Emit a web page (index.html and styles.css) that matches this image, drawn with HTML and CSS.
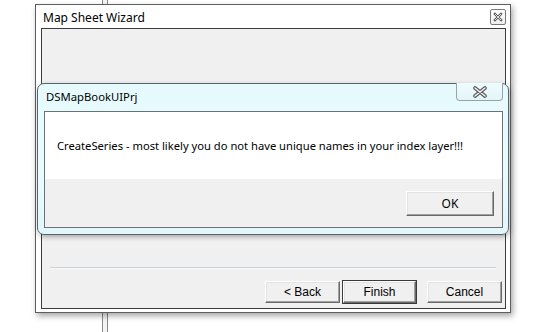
FILE: index.html
```html
<!DOCTYPE html>
<html lang="en">
<head>
  <meta charset="UTF-8" />
  <title>Map Sheet Wizard</title>
  <link rel="stylesheet" href="styles.css">
</head>
<body>
  <div class="desktop">
    <div class="rail"></div>

    <div class="wizard">
      <div class="titlebar">
        <span class="title">Map Sheet Wizard</span>
        <span class="close-small">
          <svg width="10" height="10" viewBox="0 0 10 10">
            <path d="M2 2 L8 8 M8 2 L2 8" stroke="#5a5a5a" stroke-width="2.4" stroke-linecap="square"/>
            <path d="M2 2 L8 8 M8 2 L2 8" stroke="#fff" stroke-width="0.8"/>
          </svg>
        </span>
      </div>
      <div class="client">
        <div class="spacer"></div>
        <div class="separator"></div>
        <div class="nav-buttons">
          <button class="btn nav-btn">&lt; Back</button>
          <button class="btn nav-btn default">Finish</button>
          <button class="btn nav-btn cancel">Cancel</button>
        </div>
      </div>
    </div>

    <div class="msgbox">
      <div class="msg-titlebar">
        <span class="msg-title">DSMapBookUIPrj</span>
        <span class="msg-close">
          <svg width="16" height="12" viewBox="0 0 16 12">
            <path d="M3 2 L13 10 M13 2 L3 10" stroke="#555" stroke-width="3.6" stroke-linecap="round"/>
            <path d="M3 2 L13 10 M13 2 L3 10" stroke="#fff" stroke-width="1.4" stroke-linecap="round"/>
          </svg>
        </span>
      </div>
      <div class="msg-body">
        <div class="msg-text">CreateSeries - most likely you do not have unique names in your index layer!!!</div>
        <div class="msg-footer">
          <button class="btn ok-btn">OK</button>
        </div>
      </div>
    </div>
  </div>
</body>
</html>
```

FILE: styles.css
```css
body {
  margin: 0;
  background-color: #ffffff;
  font-family: 'Noto Sans', sans-serif;
}

.desktop {
  position: relative;
  width: 549px;
  height: 332px;
  overflow: hidden;
}

.rail {
  position: absolute;
  left: 102px;
  top: 0;
  width: 4px;
  height: 332px;
  border-left: 1px solid #8a8a8a;
  border-right: 1px solid #8a8a8a;
  background-color: #f4f4f4;
}

/* outer wizard window */
.wizard {
  position: absolute;
  left: 35px;
  top: 4px;
  width: 465px;
  height: 304px;
  border: 1px solid #5e5e5e;
  background-color: #ffffff;
  box-shadow: 2px 3px 6px rgba(0,0,0,0.35);
  display: flex;
  flex-direction: column;
  padding: 0 4px 3px 5px;
}

.titlebar {
  height: 23px;
  display: flex;
  align-items: center;
  justify-content: space-between;
}

.title {
  font-size: 12px;
  color: #000;
  margin-left: 2px;
  margin-top: 1px;
}

.close-small {
  width: 14px;
  height: 14px;
  border: 1px solid #7a7a7a;
  border-radius: 2px;
  display: flex;
  align-items: center;
  justify-content: center;
  margin-top: 1px;
  background: linear-gradient(#ffffff, #eeeeee);
}

.client {
  flex: 1;
  border: 1px solid #3c3c3c;
  background-color: #f0f0f0;
  display: flex;
  flex-direction: column;
  padding: 0 3px 5px 8px;
}

.spacer {
  flex: 1;
}

.separator {
  height: 1px;
  background-color: #c8d0d8;
  border-bottom: 1px solid #fafafa;
  margin: 0 6px 12px 0;
}

.nav-buttons {
  display: flex;
  justify-content: flex-end;
}

.btn {
  font-family: 'Liberation Sans', Arial, sans-serif;
  font-size: 12px;
  color: #000;
  background-color: #f0f0f0;
  border-top: 1px solid #ffffff;
  border-left: 1px solid #ffffff;
  border-right: 1px solid #6a6a6a;
  border-bottom: 1px solid #6a6a6a;
  box-shadow: inset -1px -1px 0 #a0a0a0, inset 1px 1px 0 #e3e3e3;
  padding: 0;
}

.nav-btn {
  width: 75px;
  height: 22px;
  margin-left: 2px;
}

.nav-btn.default {
  outline: 1px solid #3a3a3a;
  width: 73px;
  margin-left: 3px;
}

.nav-btn.cancel {
  margin-left: 11px;
}

/* message box */
.msgbox {
  position: absolute;
  left: 37px;
  top: 83px;
  width: 472px;
  height: 152px;
  box-sizing: border-box;
  border: 1px solid #56656c;
  border-radius: 7px;
  background: linear-gradient(#e6fafe, #e9fbfd 60%, #e2f6fa);
  box-shadow: 1px 2px 5px rgba(0,0,0,0.3);
  display: flex;
  flex-direction: column;
  padding: 0 5px 6px 6px;
}

.msg-titlebar {
  height: 27px;
  display: flex;
  justify-content: space-between;
  align-items: flex-start;
}

.msg-title {
  font-size: 11.3px;
  color: #000;
  margin-top: 5px;
  margin-left: 2px;
}

.msg-close {
  width: 45px;
  height: 17px;
  border: 1px solid #9aa4a8;
  border-top: none;
  border-radius: 0 0 4px 4px;
  display: flex;
  align-items: center;
  justify-content: center;
  background: linear-gradient(#eefcff, #e4f4f8);
  margin-top: -1px;
}

.msg-body {
  flex: 1;
  border: 1px solid #6a7478;
  display: flex;
  flex-direction: column;
  background-color: #f0f0f0;
}

.msg-text {
  background-color: #ffffff;
  height: 67px;
  box-sizing: border-box;
  padding: 26px 0 0 12px;
  font-size: 11.2px;
  color: #000;
}

.msg-footer {
  flex: 1;
  display: flex;
  justify-content: flex-end;
  align-items: flex-start;
  padding: 12px 8px 0 0;
}

.ok-btn {
  width: 88px;
  height: 25px;
  font-family: 'Noto Sans', sans-serif;
}
```
